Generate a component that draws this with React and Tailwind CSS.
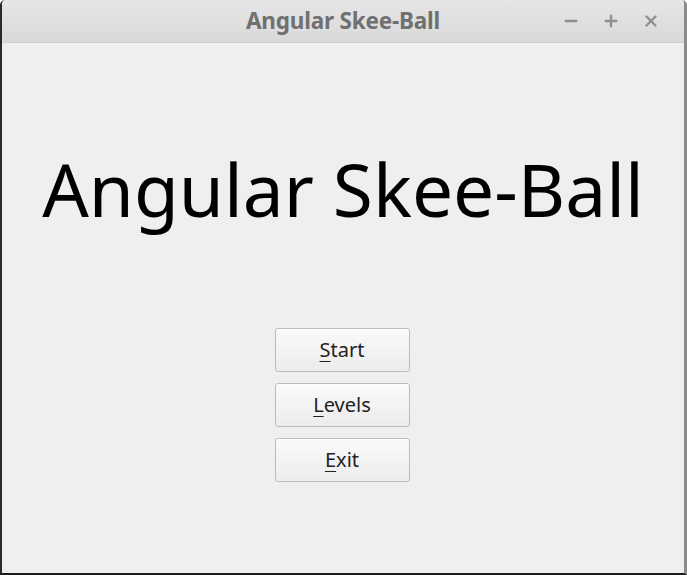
import { Minus, Plus, X } from 'lucide-react';

function MenuButton({ mnemonic, rest }) {
  return (
    <button className="w-[135px] h-[44px] rounded-[3px] border border-[#bcbcbc] bg-gradient-to-b from-[#fafafa] to-[#ececec] text-[20px] text-[#222] leading-none shadow-[inset_0_1px_0_#ffffff]">
      <span className="underline underline-offset-[4px] decoration-1">{mnemonic}</span>{rest}
    </button>
  );
}

export default function App() {
  return (
    <div className="w-[687px] h-[575px] bg-[#efefef] flex flex-col border-l-2 border-l-[#2a2a2a] border-r-[3px] border-r-[#8a8a8a] border-b-2 border-b-[#1a1a1a] rounded-t-[5px] overflow-hidden" style={{ fontFamily: '"Noto Sans", "Open Sans", sans-serif' }}>
      <div className="h-[43px] shrink-0 bg-gradient-to-b from-[#e6e6e6] to-[#d9d9d9] border-b border-[#cfcfcf] flex items-center relative">
        <div className="flex-1 text-center text-[22.5px] font-bold text-[#707070] tracking-[-0.2px]">Angular Skee-Ball</div>
        <div className="absolute right-[24px] top-0 h-full flex items-center gap-[22px] text-[#909090]">
          <Minus size={18} strokeWidth={3.2} />
          <Plus size={18} strokeWidth={3.2} />
          <X size={18} strokeWidth={3.2} />
        </div>
      </div>
      <div className="flex-1 flex flex-col items-center">
        <h1 className="mt-[109px] text-[73px] leading-none text-black font-normal whitespace-nowrap">Angular Skee-Ball</h1>
        <div className="mt-[103px] -ml-[2px] flex flex-col gap-[11px]">
          <MenuButton mnemonic="S" rest="tart" />
          <MenuButton mnemonic="L" rest="evels" />
          <MenuButton mnemonic="E" rest="xit" />
        </div>
      </div>
    </div>
  );
}
